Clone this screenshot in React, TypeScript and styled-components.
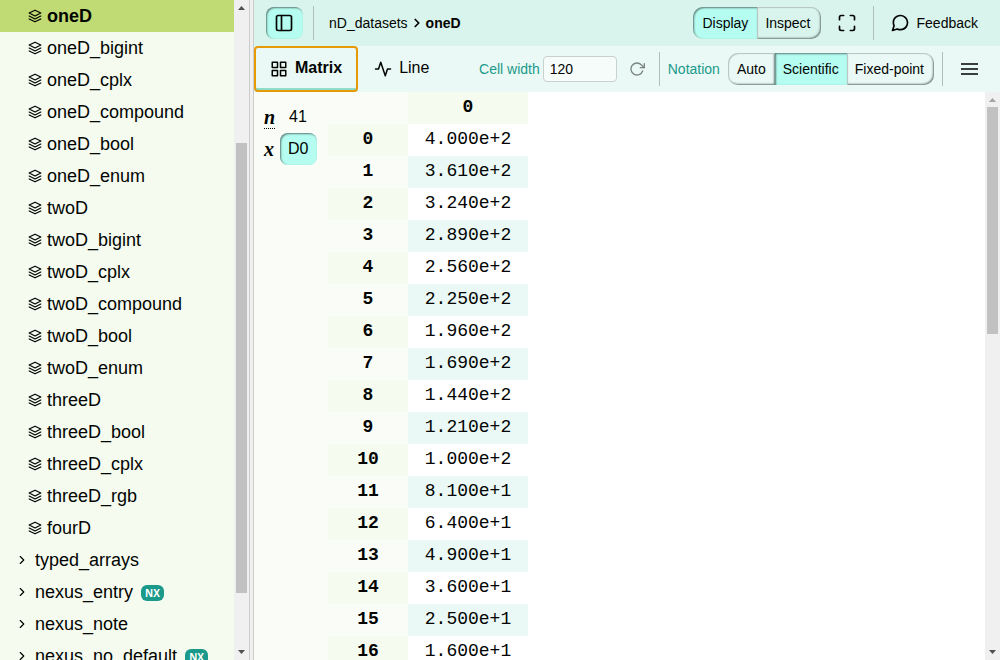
import React from 'react';
import styled, { createGlobalStyle, css } from 'styled-components';
import {
  FiActivity,
  FiChevronRight,
  FiGrid,
  FiLayers,
  FiMaximize,
  FiMessageCircle,
  FiRotateCw,
  FiSidebar,
} from 'react-icons/fi';

const GlobalStyle = createGlobalStyle`
  * { box-sizing: border-box; }
  body {
    margin: 0;
    font-family: "Liberation Sans", Arial, sans-serif;
    font-size: 16px;
    color: #020402;
    background: #fff;
  }
  button, input { font: inherit; color: inherit; }
  svg { display: block; flex: none; }
`;

const Layout = styled.div`
  display: flex;
  height: 100vh;
  overflow: hidden;
`;

const Sidebar = styled.nav`
  display: flex;
  flex: none;
  width: 25%;
  background: #f5fbef;
  border-right: 1px solid #ccc;
`;

const Tree = styled.ul`
  flex: 1;
  min-width: 0;
  margin: 0;
  padding: 0;
  list-style: none;
  overflow: hidden;
`;

const TreeItem = styled.button<{ $leaf?: boolean; $active?: boolean }>`
  display: flex;
  align-items: center;
  gap: ${(p) => (p.$leaf ? 5 : 6)}px;
  width: 100%;
  height: 32px;
  padding: 0 0 0 ${(p) => (p.$leaf ? 28 : 15)}px;
  border: 0;
  background: ${(p) => (p.$active ? '#c0da74' : 'transparent')};
  font-size: 18px;
  font-weight: ${(p) => (p.$active ? 700 : 400)};
  text-align: left;
  white-space: nowrap;
  cursor: pointer;
`;

const Badge = styled.span`
  margin: 2px 0 0 2px;
  padding: 0 4px;
  border-radius: 6px;
  background: #1b998b;
  color: #fff;
  font-family: "Open Sans", "Noto Sans", sans-serif;
  font-size: 10px;
  font-weight: 700;
  line-height: 16px;
`;

const Splitter = styled.div`
  flex: none;
  width: 4px;
  background: #f0f0f0;
  border-right: 1px solid #ccc;
`;

const Track = styled.div`
  display: flex;
  flex-direction: column;
  align-items: center;
  flex: none;
  width: 15px;
  background: #f0f0f0;
`;

const Arrow = styled.svg`
  width: 15px;
  height: 15px;
`;

const Rail = styled.div`
  display: flex;
  flex-direction: column;
  flex: 1;
  width: 11px;
`;

const Space = styled.div<{ $grow: number }>`
  flex: ${(p) => p.$grow} 0 0;
`;

const Thumb = styled(Space)`
  background: #c1c1c1;
`;

const Main = styled.main`
  display: flex;
  flex-direction: column;
  flex: 1;
  min-width: 0;
`;

const bar = css`
  display: flex;
  align-items: center;
  flex: none;
  height: 46px;
  font-size: 14px;
  white-space: nowrap;
`;

const Header = styled.header`
  ${bar}
  padding: 0 22px 0 12px;
  background: #d9f4ec;
`;

const Toolbar = styled.div`
  ${bar}
  padding-right: 12px;
  background: #eaf9f5;
`;

const Separator = styled.span<{ $gap: number }>`
  width: 1px;
  height: 34px;
  margin: 0 ${(p) => p.$gap}px;
  background: #adc0bb;
`;

const pressed = css`
  background: #b5fdf1;
  box-shadow: inset 1px 1px 2px #5b7a75;
`;

const ToggleButton = styled.button`
  display: flex;
  align-items: center;
  justify-content: center;
  padding: 0 9px 0 8px;
  height: 32px;
  border: 0;
  border-radius: 8px;
  cursor: pointer;
  ${pressed}
`;

const Crumbs = styled.div`
  display: flex;
  align-items: center;
  gap: 2px;
  flex: 1;
  padding-left: 5px;
`;

const Segments = styled.div`
  display: flex;
  height: 32px;
  margin-left: 8px;
`;

const Segment = styled.button<{ $on?: boolean }>`
  padding: 0 8px;
  border: 0;
  background: transparent;
  box-shadow: inset 1px 1px 1px #b4c4c0, inset -1px -1px 2px #6b7d79;
  cursor: pointer;
  ${(p) => p.$on && pressed}

  &:first-child { border-radius: 10px 0 0 10px; padding: 0 9px; }
  &:last-child { border-radius: 0 10px 10px 0; padding-right: 10px; }
`;

const PlainButton = styled.button`
  display: flex;
  align-items: center;
  gap: 7px;
  padding: 0;
  border: 0;
  background: none;
  cursor: pointer;
`;

const ResetButton = styled(PlainButton)`
  margin: 0 6px 0 12px;
  color: #7b8482;
`;

const ExpandButton = styled(PlainButton)`
  margin-left: 16px;
`;

const MenuButton = styled(PlainButton)`
  padding: 0 9px 0 8px;
  color: #3a3e3d;
`;

const Tabs = styled.div`
  display: flex;
  flex: 1;
  height: 46px;
`;

const Tab = styled.button<{ $on?: boolean }>`
  display: flex;
  align-items: center;
  gap: 7px;
  padding: 0 16px;
  border: 0;
  border-radius: 4px;
  background: transparent;
  font-size: 16px;
  line-height: 20px;
  cursor: pointer;

  span { padding-bottom: 2px; }

  ${(p) => p.$on && css`
    font-weight: 700;
    box-shadow: inset 0 -4px #8eddca;
    outline: 2px solid #e69a08;
    outline-offset: -2px;
  `}
`;

const Label = styled.label`
  color: #1b998b;
`;

const WidthInput = styled.input`
  width: 74px;
  height: 26px;
  margin-left: 3px;
  padding: 0 6px;
  border: 1px solid #c9d1cf;
  border-radius: 4px;
  background: #f6fcfa;
`;

const Content = styled.section`
  display: flex;
  flex: 1;
  min-height: 0;
`;

const Mapper = styled.div`
  flex: none;
  width: 74px;
  padding: 9px 10px;
  background: #fafdf7;
`;

const MapperRow = styled.div`
  display: flex;
  align-items: center;
  height: 32px;
`;

const Axis = styled.abbr<{ $hint?: boolean }>`
  width: 16px;
  font: italic bold 20px/20px "Liberation Serif", "Times New Roman", serif;
  text-decoration: none;

  span { border-bottom: ${(p) => (p.$hint ? '1px dotted #020402' : '0')}; }
`;

const Size = styled.span`
  padding-left: 9px;
`;

const MatrixArea = styled.div`
  flex: 1;
  min-width: 0;
  overflow: hidden;
  background: #fff;
`;

const Matrix = styled.table`
  border-collapse: collapse;
  font-family: "Liberation Mono", "Courier New", monospace;
  font-size: 18px;
  line-height: 20px;
  text-align: center;

  th, td { height: 32px; padding: 0 0 2px; }
  th { width: 80px; background: #fafdf7; }
  td { width: 120px; }
  thead th:last-child { width: 120px; background: #f5fbef; }
  tbody tr:nth-child(odd) th { background: #f5fbef; }
  tbody tr:nth-child(even) td { background: #eaf9f5; }
`;

const datasets = [
  'oneD', 'oneD_bigint', 'oneD_cplx', 'oneD_compound', 'oneD_bool', 'oneD_enum',
  'twoD', 'twoD_bigint', 'twoD_cplx', 'twoD_compound', 'twoD_bool', 'twoD_enum',
  'threeD', 'threeD_bool', 'threeD_cplx', 'threeD_rgb', 'fourD',
];

const groups = [
  { name: 'typed_arrays' },
  { name: 'nexus_entry', nx: true },
  { name: 'nexus_note' },
  { name: 'nexus_no_default', nx: true },
];

const values = [
  '4.000e+2', '3.610e+2', '3.240e+2', '2.890e+2', '2.560e+2', '2.250e+2',
  '1.960e+2', '1.690e+2', '1.440e+2', '1.210e+2', '1.000e+2', '8.100e+1',
  '6.400e+1', '4.900e+1', '3.600e+1', '2.500e+1', '1.600e+1',
];

interface ScrollbarProps {
  before: number;
  thumb: number;
  after: number;
  atTop?: boolean;
}

function Scrollbar({ before, thumb, after, atTop }: ScrollbarProps) {
  return (
    <Track aria-hidden>
      <Arrow viewBox="0 0 15 15">
        <path d="M4 10 7.5 6 11 10z" fill={atTop ? '#a3a3a3' : '#505050'} />
      </Arrow>
      <Rail>
        <Space $grow={before} />
        <Thumb $grow={thumb} />
        <Space $grow={after} />
      </Rail>
      <Arrow viewBox="0 0 15 15">
        <path d="M4 5 7.5 9 11 5z" fill="#505050" />
      </Arrow>
    </Track>
  );
}

export default function App() {
  return (
    <>
      <GlobalStyle />
      <Layout>
        <Sidebar aria-label="File explorer">
          <Tree>
            {datasets.map((name, i) => (
              <li key={name}>
                <TreeItem $leaf $active={i === 0}>
                  <FiLayers size={14} />
                  {name}
                </TreeItem>
              </li>
            ))}
            {groups.map(({ name, nx }) => (
              <li key={name}>
                <TreeItem>
                  <FiChevronRight size={14} />
                  {name}
                  {nx && <Badge>NX</Badge>}
                </TreeItem>
              </li>
            ))}
          </Tree>
          <Scrollbar before={128} thumb={450} after={52} />
        </Sidebar>
        <Splitter />
        <Main>
          <Header>
            <ToggleButton aria-label="Toggle sidebar" aria-pressed>
              <FiSidebar size={20} />
            </ToggleButton>
            <Separator $gap={10} />
            <Crumbs>
              <span>nD_datasets</span>
              <FiChevronRight size={14} strokeWidth={3} />
              <b>oneD</b>
            </Crumbs>
            <Segments>
              <Segment $on>Display</Segment>
              <Segment>Inspect</Segment>
            </Segments>
            <ExpandButton aria-label="Toggle fullscreen">
              <FiMaximize size={20} />
            </ExpandButton>
            <Separator $gap={16} />
            <PlainButton>
              <FiMessageCircle size={20} />
              Feedback
            </PlainButton>
          </Header>
          <Toolbar>
            <Tabs role="tablist">
              <Tab role="tab" $on aria-selected>
                <FiGrid size={18} />
                <span>Matrix</span>
              </Tab>
              <Tab role="tab" aria-selected={false}>
                <FiActivity size={18} />
                <span>Line</span>
              </Tab>
            </Tabs>
            <Label htmlFor="cell-width">Cell width</Label>
            <WidthInput id="cell-width" defaultValue="120" />
            <ResetButton aria-label="Reset cell width">
              <FiRotateCw size={16} />
            </ResetButton>
            <Separator $gap={8} />
            <Label as="span">Notation</Label>
            <Segments>
              <Segment>Auto</Segment>
              <Segment $on>Scientific</Segment>
              <Segment>Fixed-point</Segment>
            </Segments>
            <Separator $gap={8} />
            <MenuButton aria-label="More controls">
              <svg width="20" height="20" viewBox="0 0 20 20" stroke="currentColor" strokeWidth="2">
                <path d="M2 5h17M2 10h17M2 15h17" />
              </svg>
            </MenuButton>
          </Toolbar>
          <Content>
            <Mapper>
              <MapperRow>
                <Axis $hint title="Dimension sizes"><span>n</span></Axis>
                <Size>41</Size>
              </MapperRow>
              <MapperRow>
                <Axis><span>x</span></Axis>
                <ToggleButton aria-pressed>D0</ToggleButton>
              </MapperRow>
            </Mapper>
            <MatrixArea>
              <Matrix>
                <thead>
                  <tr>
                    <th aria-label="Index" />
                    <th scope="col">0</th>
                  </tr>
                </thead>
                <tbody>
                  {values.map((value, i) => (
                    <tr key={value}>
                      <th scope="row">{i}</th>
                      <td>{value}</td>
                    </tr>
                  ))}
                </tbody>
              </Matrix>
            </MatrixArea>
            <Scrollbar before={0} thumb={227} after={311} atTop />
          </Content>
        </Main>
      </Layout>
    </>
  );
}
